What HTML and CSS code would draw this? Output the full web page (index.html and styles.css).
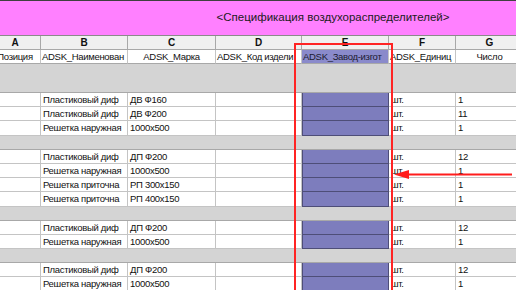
FILE: index.html
```html
<!DOCTYPE html>
<html lang="ru">
<head>
<meta charset="utf-8">
<title>Спецификация воздухораспределителей</title>
<link rel="stylesheet" href="styles.css">
</head>
<body>
<div class="viewport">
  <div class="sheet">
    <div class="title">&lt;Спецификация воздухораспределителей&gt;</div>
    <div class="row letters">
      <div class="c">A</div><div class="c">B</div><div class="c">C</div><div class="c">D</div><div class="c">E</div><div class="c">F</div><div class="c">G</div>
    </div>
    <div class="row names">
      <div class="c">Позиция</div><div class="c clip">ADSK_Наименован</div><div class="c">ADSK_Марка</div><div class="c clip">ADSK_Код издели</div><div class="c clip sel">ADSK_Завод-изгот</div><div class="c clip">ADSK_Единиц</div><div class="c">Число</div>
    </div>
    <div class="group double"></div>
    <div class="row data">
      <div class="c"></div><div class="c">Пластиковый диф</div><div class="c">ДВ Ф160</div><div class="c"></div><div class="c e"></div><div class="c">шт.</div><div class="c">1</div>
    </div>
    <div class="row data">
      <div class="c"></div><div class="c">Пластиковый диф</div><div class="c">ДВ Ф200</div><div class="c"></div><div class="c e"></div><div class="c">шт.</div><div class="c">11</div>
    </div>
    <div class="row data tall">
      <div class="c"></div><div class="c">Решетка наружная</div><div class="c">1000x500</div><div class="c"></div><div class="c e"></div><div class="c">шт.</div><div class="c">1</div>
    </div>
    <div class="group"></div>
    <div class="row data">
      <div class="c"></div><div class="c">Пластиковый диф</div><div class="c">ДП Ф200</div><div class="c"></div><div class="c e"></div><div class="c">шт.</div><div class="c">12</div>
    </div>
    <div class="row data">
      <div class="c"></div><div class="c">Решетка наружная</div><div class="c">1000x500</div><div class="c"></div><div class="c e"></div><div class="c">шт.</div><div class="c">1</div>
    </div>
    <div class="row data">
      <div class="c"></div><div class="c">Решетка приточна</div><div class="c">РП 300x150</div><div class="c"></div><div class="c e"></div><div class="c">шт.</div><div class="c">1</div>
    </div>
    <div class="row data tall">
      <div class="c"></div><div class="c">Решетка приточна</div><div class="c">РП 400x150</div><div class="c"></div><div class="c e"></div><div class="c">шт.</div><div class="c">1</div>
    </div>
    <div class="group"></div>
    <div class="row data">
      <div class="c"></div><div class="c">Пластиковый диф</div><div class="c">ДП Ф200</div><div class="c"></div><div class="c e"></div><div class="c">шт.</div><div class="c">12</div>
    </div>
    <div class="row data">
      <div class="c"></div><div class="c">Решетка наружная</div><div class="c">1000x500</div><div class="c"></div><div class="c e"></div><div class="c">шт.</div><div class="c">1</div>
    </div>
    <div class="group"></div>
    <div class="row data">
      <div class="c"></div><div class="c">Пластиковый диф</div><div class="c">ДП Ф200</div><div class="c"></div><div class="c e"></div><div class="c">шт.</div><div class="c">12</div>
    </div>
    <div class="row data">
      <div class="c"></div><div class="c">Решетка наружная</div><div class="c">1000x500</div><div class="c"></div><div class="c e"></div><div class="c">шт.</div><div class="c">1</div>
    </div>
  </div>
  <svg class="marks" width="516" height="290" viewBox="0 0 516 290" aria-hidden="true">
    <path d="M295 292 V44 H392 V292" fill="none" stroke="#ff2424" stroke-width="2"/>
    <line x1="406" y1="174.5" x2="512" y2="174.5" stroke="#ff1c1c" stroke-width="2"/>
    <polygon points="394,174.5 409,170 409,179" fill="#ff1c1c"/>
  </svg>
</div>
</body>
</html>
```
FILE: styles.css
```css
html, body {
  margin: 0;
  padding: 0;
  background: #ffffff;
}
.viewport {
  position: relative;
  width: 516px;
  height: 290px;
  overflow: hidden;
  font-family: "Liberation Sans", Arial, sans-serif;
  font-size: 9.5px;
  color: #111;
}
.sheet {
  width: 530px;
  display: flex;
  flex-direction: column;
}
.title {
  height: 36px;
  box-sizing: border-box;
  background: #ff80ff;
  border-top: 1px solid #404040;
  border-bottom: 1px solid #8a8a8a;
  padding-left: 150px;
  width: 516px;
  text-align: center;
  line-height: 33px;
  font-size: 11.5px;
  color: #1c1c1c;
}
.row {
  display: grid;
  grid-template-columns: 51px 87px 88px 86px 87px 67px 68px;
  margin-left: -10px;
  height: 14px;
}
.row.tall {
  height: 15px;
}
.c {
  box-sizing: border-box;
  border-right: 1px solid #c4c4c4;
  border-bottom: 1px solid #c4c4c4;
  white-space: nowrap;
  overflow: hidden;
  line-height: 13px;
  padding: 0 2px;
}
.data .c {
  letter-spacing: -0.3px;
  background: #ffffff;
}
.letters {
  background: #f0f0f0;
}
.letters .c {
  text-align: center;
  font-weight: bold;
  font-size: 10px;
  border-right-color: #a8a8a8;
  border-bottom-color: #a8a8a8;
}
.names .c {
  text-align: center;
  letter-spacing: -0.3px;
  padding: 0 1px;
  background: #ffffff;
  border-bottom-color: #a8a8a8;
}
.names .c.clip {
  text-align: left;
}
.names .c.sel {
  background: #8a8acb;
  color: #1a1a30;
}
.group {
  height: 14px;
  box-sizing: border-box;
  background: #d4d4d4;
  border-bottom: 1px solid #a8a8a8;
}
.group.double {
  height: 29px;
}
.data .c.e {
  background: #7d7dbd;
  border: 1px solid #4e4e78;
  border-top: none;
}
.marks {
  position: absolute;
  top: 0;
  left: 0;
  pointer-events: none;
}
```
